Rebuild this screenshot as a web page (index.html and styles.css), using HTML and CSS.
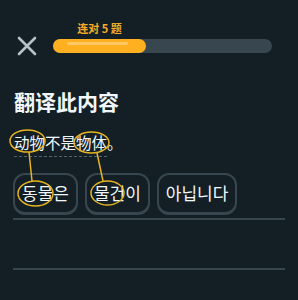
FILE: index.html
```html
<!DOCTYPE html>
<html lang="zh">

<head>
  <meta charset="UTF-8">
  <meta name="viewport" content="width=device-width, initial-scale=1.0">
  <title>翻译此内容</title>
  <link rel="stylesheet" href="styles.css">
</head>

<body>
  <div class="screen">
    <header class="top">
      <svg class="close" width="20" height="20" viewBox="0 0 20 20">
        <path d="M2 2 L18 18 M18 2 L2 18" stroke="#b7c1c6" stroke-width="2.6" stroke-linecap="round" />
      </svg>
      <div class="progress">
        <div class="fill">
          <span class="streak">连对 5 题</span>
        </div>
      </div>
    </header>

    <main class="lesson">
      <h1 class="title">翻译此内容</h1>
      <p class="prompt"><span class="sentence">动物不是物体</span>。</p>

      <div class="answer">
        <div class="bank">
          <span class="chip">동물은</span>
          <span class="chip">물건이</span>
          <span class="chip">아닙니다</span>
        </div>
        <div class="rule"></div>
        <div class="rule rule-empty"></div>
      </div>
    </main>

    <!-- word alignment marks drawn over the text -->
    <svg class="marks" width="298" height="300" viewBox="0 0 298 300">
      <g fill="none" stroke="#e6b422" stroke-width="1.5">
        <ellipse cx="27.5" cy="141" rx="17.5" ry="11" />
        <ellipse cx="91.5" cy="142.5" rx="17.5" ry="10.5" />
        <ellipse cx="35.5" cy="193.5" rx="17.5" ry="12.5" />
        <ellipse cx="107.5" cy="193" rx="16.5" ry="12" />
        <path d="M29 152 L32 181" />
        <path d="M97 153 L103 181" />
      </g>
    </svg>
  </div>
</body>

</html>
```

FILE: styles.css
```css
:root {
  font-family: "Noto Sans CJK SC", "Noto Sans", sans-serif;
}

body {
  background-color: #131f24;
  color: #f1f7fb;
  margin: 0;
  padding: 0;
}

.screen {
  position: relative;
  width: 298px;
  height: 300px;
  overflow: hidden;
}

.top {
  display: flex;
  align-items: center;
  gap: 16px;
  padding: 36px 26px 0 17px;
}

.close {
  display: block;
  flex-shrink: 0;
}

.progress {
  flex: 1;
  height: 14px;
  border-radius: 7px;
  background-color: #37464f;
}

.fill {
  position: relative;
  width: 42.5%;
  height: 100%;
  border-radius: 7px;
  background-color: #ffb020;
}

.fill::after {
  content: "";
  position: absolute;
  top: 3px;
  left: 14px;
  right: 18px;
  height: 3px;
  border-radius: 2px;
  background-color: rgba(255, 255, 255, 0.3);
}

.streak {
  position: absolute;
  left: 50%;
  bottom: calc(100% + 4px);
  transform: translateX(-50%);
  white-space: nowrap;
  font-size: 11px;
  line-height: 14px;
  font-weight: 700;
  color: #f7ac2a;
}

.lesson {
  padding: 0 13px 0 14px;
}

.title {
  margin: 31px 0 0;
  font-size: 21px;
  line-height: 28px;
  font-weight: 700;
}

.prompt {
  margin: 16px 0 0;
  font-size: 15.5px;
  line-height: 22px;
}

.sentence {
  padding-bottom: 3px;
  border-bottom: 1.5px dashed #52656d;
}

.answer {
  margin: 20px 0 0 -1px;
}

.bank {
  display: flex;
  gap: 7px;
}

.chip {
  font-family: "Noto Sans CJK KR", sans-serif;
  font-size: 17px;
  line-height: 22px;
  padding: 7px 7px 8px;
  border: 2px solid #37464f;
  border-bottom-width: 3px;
  border-radius: 12px;
}

.rule {
  height: 2px;
  margin-top: 3px;
  background-color: #37464f;
}

.rule-empty {
  margin-top: 48px;
}

.marks {
  position: absolute;
  top: 0;
  left: 0;
  pointer-events: none;
}
```
